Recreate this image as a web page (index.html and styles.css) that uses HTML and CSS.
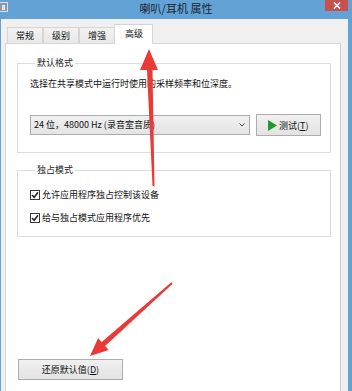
FILE: index.html
```html
<!DOCTYPE html>
<html lang="zh-CN">
<head>
<meta charset="utf-8">
<title>喇叭/耳机 属性</title>
<link rel="stylesheet" href="styles.css">
</head>
<body>
<div class="window">
  <div class="titlebar">
    <span class="appicon"><span class="appicon-inner"></span></span>
    <span class="title">喇叭/耳机 属性</span>
    <span class="close">
      <svg width="8" height="7" viewBox="0 0 8 7"><path d="M1 0.5 L7 6.5 M7 0.5 L1 6.5" stroke="#fff" stroke-width="1.5"/></svg>
    </span>
  </div>
  <div class="client">
    <div class="tabs">
      <div class="tab">常规</div>
      <div class="tab">级别</div>
      <div class="tab">增强</div>
      <div class="tab active">高级</div>
    </div>
    <div class="panel">
      <fieldset class="group g1">
        <legend>默认格式</legend>
        <p class="desc">选择在共享模式中运行时使用的采样频率和位深度。</p>
        <div class="format-row">
          <div class="combo">
            <span class="combo-text">24 位，48000 Hz (录音室音质)</span>
            <svg class="chev" width="6" height="4" viewBox="0 0 6 4"><path d="M0.5 0.5 L3 3 L5.5 0.5" fill="none" stroke="#444" stroke-width="1"/></svg>
          </div>
          <button class="btn test"><svg class="play" width="9" height="11" viewBox="0 0 9 11"><path d="M0 0 L9 5.5 L0 11 Z" fill="#1f9a2b"/></svg>测试(<u>T</u>)</button>
        </div>
      </fieldset>
      <fieldset class="group g2">
        <legend>独占模式</legend>
        <label class="check"><span class="box"><svg width="8" height="8" viewBox="0 0 8 8"><path d="M1 4 L3.2 6.3 L7 1.3" fill="none" stroke="#222" stroke-width="1.5"/></svg></span>允许应用程序独占控制该设备</label>
        <label class="check second"><span class="box"><svg width="8" height="8" viewBox="0 0 8 8"><path d="M1 4 L3.2 6.3 L7 1.3" fill="none" stroke="#222" stroke-width="1.5"/></svg></span>给与独占模式应用程序优先</label>
      </fieldset>
      <button class="btn restore">还原默认值(<u>D</u>)</button>
    </div>
  </div>
  <svg class="arrows" width="352" height="391" viewBox="0 0 352 391">
    <polygon points="149,49 158,70 152.5,70 154.5,186 152.5,186 147,70 140,70" fill="#ea3a36"/>
    <polygon points="171.3,282.3 172.7,283.7 105.1,345.9 108.7,350 90,356 98.1,338 101.7,342.1" fill="#ea3a36"/>
  </svg>
</div>
</body>
</html>
```

FILE: styles.css
```css
html, body {
  margin: 0;
  padding: 0;
  background: #ffffff;
}

.window {
  position: relative;
  width: 352px;
  height: 391px;
  overflow: hidden;
  background: #62a2d5;
  display: flex;
  flex-direction: column;
  font-family: "Noto Sans CJK SC", "Noto Sans", sans-serif;
  color: #111;
}

.titlebar {
  height: 19px;
  flex: none;
  display: grid;
  grid-template-columns: 1fr auto 1fr;
  align-items: start;
}

.appicon {
  justify-self: start;
  margin-top: 2px;
  width: 8px;
  height: 10px;
  background: #8d9aa6;
  border: 1px solid #d6dde3;
  border-left: none;
  box-sizing: border-box;
  display: flex;
  align-items: center;
  justify-content: center;
}

.appicon-inner {
  width: 3px;
  height: 5px;
  background: #dfe6ec;
}

.title {
  font-size: 11px;
  line-height: 17px;
  color: #1b2430;
  white-space: nowrap;
}

.close {
  justify-self: end;
  margin-right: 4px;
  width: 23px;
  height: 11px;
  background: #c8514f;
  display: flex;
  align-items: center;
  justify-content: center;
}

.close svg {
  display: block;
}

.client {
  flex: 1;
  margin: 0 4px 0 1px;
  padding: 5px 7px 0 4px;
  background: #f0f0f0;
  display: flex;
  flex-direction: column;
  min-height: 0;
}

.tabs {
  display: flex;
  align-items: flex-end;
  margin-left: 2px;
  height: 19px;
  flex: none;
}

.tab {
  height: 16px;
  box-sizing: border-box;
  padding: 0 8px;
  border: 1px solid #d5d5d5;
  border-bottom: none;
  background: linear-gradient(#f2f2f2, #e8e8e8);
  font-size: 9px;
  line-height: 15px;
  color: #111;
}

.tab.active {
  position: relative;
  z-index: 1;
  height: 20px;
  margin-bottom: -1px;
  margin-left: -1px;
  padding: 0 9px 0 10px;
  background: #ffffff;
  line-height: 18px;
}

.panel {
  flex: 1;
  background: #ffffff;
  border: 1px solid #d7d7d7;
  border-right-color: #cfcfcf;
  border-bottom: none;
  padding: 0 9px 0 11px;
  display: flex;
  flex-direction: column;
  align-items: flex-start;
}

.group {
  width: 314px;
  box-sizing: border-box;
  margin: 12px 0 0 0;
  padding: 0 0 16px 12px;
  border: 1px solid #dcdcdc;
  min-inline-size: 0;
}

.group legend {
  margin-left: 5px;
  padding: 0 2px;
  font-size: 9px;
  line-height: 14px;
  color: #222;
}

.g2 {
  margin-top: 10px;
  padding-bottom: 10px;
}

.desc {
  margin: 6px 0 0 0;
  font-size: 9px;
  line-height: 16px;
  color: #111;
}

.format-row {
  margin-top: 22px;
  display: flex;
  align-items: center;
  gap: 6px;
}

.combo {
  width: 220px;
  height: 20px;
  box-sizing: border-box;
  border: 1px solid #acacac;
  background: linear-gradient(#f0f0f0, #e4e4e4);
  display: flex;
  align-items: center;
  justify-content: space-between;
  padding: 0 4px 0 3px;
}

.combo-text {
  font-size: 9px;
  line-height: 14px;
  color: #111;
  white-space: nowrap;
}

.chev {
  display: block;
}

.btn {
  box-sizing: border-box;
  border: 1px solid #adadad;
  background: linear-gradient(#f0f0f0, #e3e3e3);
  font-family: "Noto Sans CJK SC", "Noto Sans", sans-serif;
  font-size: 9px;
  color: #111;
  padding: 0;
  display: flex;
  align-items: center;
  justify-content: center;
}

.btn u {
  text-decoration: underline;
  text-underline-offset: 1px;
}

.test {
  width: 65px;
  height: 22px;
  justify-content: flex-start;
  padding-left: 11px;
}

.play {
  display: block;
  margin-right: 2px;
}

.check {
  display: flex;
  align-items: center;
  margin-top: 10px;
  height: 16px;
  font-size: 9px;
  line-height: 16px;
  color: #111;
}

.check.second {
  margin-top: 7px;
}

.box {
  width: 10px;
  height: 10px;
  box-sizing: border-box;
  border: 1px solid #3a3a3a;
  background: #ffffff;
  margin-right: 2px;
  display: flex;
  align-items: center;
  justify-content: center;
}

.box svg {
  display: block;
}

.restore {
  margin-top: 122px;
  margin-left: 1px;
  width: 105px;
  height: 21px;
}

.arrows {
  position: absolute;
  left: 0;
  top: 0;
  pointer-events: none;
}
```
